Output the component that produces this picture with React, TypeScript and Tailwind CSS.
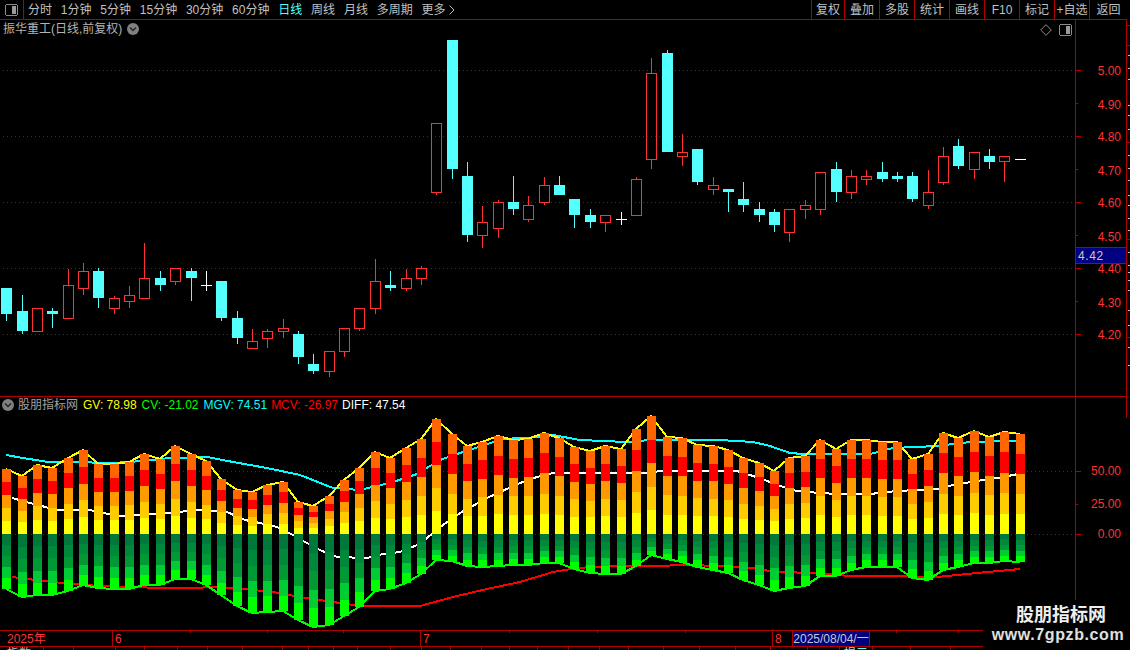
type Candle = [number, number, number, number, number, "r" | "c" | "w"];

// left, high, body top, body bottom, low, kind
const candles: Candle[] = [
  [1, 288, 288, 314, 321, "c"], [17, 295, 311, 331, 334, "c"], [32, 308, 308, 332, 332, "r"], [47, 308, 311, 314, 328, "c"],
  [63, 269, 285, 319, 319, "r"], [78, 263, 271, 289, 295, "r"], [93, 268, 271, 298, 308, "c"], [109, 296, 298, 309, 314, "r"],
  [124, 286, 295, 302, 308, "r"], [139, 243, 278, 299, 299, "r"], [155, 271, 278, 285, 291, "c"], [170, 268, 268, 282, 285, "r"],
  [186, 268, 271, 278, 301, "c"], [201, 271, 285, 285, 291, "w"], [216, 281, 281, 318, 321, "c"], [232, 311, 318, 338, 344, "c"],
  [247, 329, 341, 349, 349, "r"], [262, 329, 331, 339, 348, "r"], [278, 319, 328, 332, 338, "r"], [293, 331, 334, 357, 364, "c"],
  [308, 354, 364, 371, 374, "c"], [324, 351, 351, 372, 377, "r"], [339, 328, 328, 352, 357, "r"], [354, 308, 308, 329, 331, "r"],
  [370, 259, 281, 309, 314, "r"], [385, 271, 285, 288, 291, "c"], [401, 269, 278, 289, 291, "r"], [416, 266, 268, 279, 285, "r"],
  [431, 123, 123, 193, 195, "r"], [447, 40, 40, 169, 179, "c"], [462, 162, 176, 235, 242, "c"], [477, 206, 222, 236, 248, "r"],
  [493, 200, 202, 229, 238, "r"], [508, 176, 202, 209, 215, "c"], [523, 196, 205, 220, 222, "r"], [539, 177, 185, 203, 205, "r"],
  [554, 176, 185, 195, 195, "c"], [569, 199, 199, 215, 228, "c"], [585, 209, 215, 222, 228, "c"], [600, 215, 215, 223, 232, "r"],
  [616, 212, 219, 219, 225, "w"], [631, 177, 179, 216, 216, "r"], [646, 58, 73, 160, 169, "r"], [662, 50, 53, 152, 152, "c"],
  [677, 134, 152, 157, 166, "r"], [692, 149, 149, 182, 185, "c"], [708, 177, 185, 190, 195, "r"], [723, 189, 189, 192, 212, "c"],
  [738, 182, 199, 205, 212, "c"], [754, 202, 209, 215, 222, "c"], [769, 209, 212, 225, 232, "c"], [784, 209, 209, 233, 242, "r"],
  [800, 200, 205, 210, 219, "r"], [815, 172, 172, 210, 215, "r"], [831, 162, 169, 192, 202, "c"], [846, 170, 176, 193, 199, "r"],
  [861, 170, 176, 180, 185, "r"], [877, 162, 172, 179, 182, "c"], [892, 172, 176, 179, 182, "c"], [907, 172, 176, 199, 202, "c"],
  [923, 170, 192, 206, 209, "r"], [938, 147, 156, 183, 185, "r"], [953, 139, 146, 166, 169, "c"], [969, 152, 152, 170, 179, "r"],
  [984, 149, 156, 162, 169, "c"], [999, 156, 156, 162, 182, "r"], [1015, 159, 159, 159, 159, "w"],
];

const barTops = [
  469, 476, 465, 468, 458, 450, 464, 464, 462, 454, 459, 446, 454, 461, 479, 490, 492, 485, 482, 502, 506, 496, 480, 468,
  452, 458, 448, 439, 419, 434, 446, 442, 436, 440, 439, 433, 438, 447, 451, 446, 449, 429, 416, 437, 438, 445, 446, 450,
  458, 463, 471, 458, 456, 440, 449, 440, 440, 442, 442, 459, 454, 433, 438, 431, 437, 432, 434,
];

const barBottoms = [
  589, 597, 595, 595, 591, 585, 588, 589, 589, 585, 585, 579, 579, 585, 595, 606, 613, 612, 611, 620, 627, 625, 616, 607,
  591, 589, 583, 574, 560, 561, 566, 567, 566, 565, 565, 563, 563, 569, 573, 574, 574, 566, 555, 559, 562, 567, 570, 573,
  580, 585, 591, 588, 586, 576, 576, 570, 567, 567, 567, 578, 580, 570, 567, 563, 563, 561, 562,
];

const cyanLine =
  "6,455 23,458 48,462 83,462 100,463 113,463 143,461 170,458 207,457 233,462 267,468 300,475 333,488 360,490 393,482 417,474 420,472 440,460 463,452 503,439 540,437 553,435 580,440 627,442 650,440 720,440 753,442 770,446 790,453 803,454 870,454 893,448 937,446 970,442 1017,441";
const whiteLine =
  "12,498 30,503 57,510 90,510 117,516 167,513 200,510 227,512 245,520 260,523 277,527 293,535 305,542 320,550 337,557 367,558 383,554 400,552 417,545 427,538 443,525 460,513 487,498 520,483 537,477 553,473 647,473 660,471 737,471 753,476 770,482 780,486 797,491 820,493 837,494 870,494 897,491 937,489 953,485 977,481 1003,477 1018,474";
const redLine =
  "12,577 43,581 73,584 100,586 133,587 160,588 190,588 217,587 243,589 273,592 300,597 333,602 360,606 420,606 453,597 487,589 520,582 553,572 577,568 610,566 653,566 687,565 720,566 753,568 770,571 780,572 813,573 850,576 897,576 937,577 977,573 1020,569";

const upColors = ["#ffff00", "#ffcc00", "#ff9900", "#ff0000", "#ff6600"];
const downColors = ["#00773b", "#00883b", "#009933", "#00cc33", "#00ff00"];
const zero = 534;

const leftTabs = ["分时", "1分钟", "5分钟", "15分钟", "30分钟", "60分钟", "日线", "周线", "月线", "多周期", "更多"];
const rightTabs = [
  { label: "复权", w: "w-[33px]" }, { label: "叠加", w: "w-[35px]" }, { label: "多股", w: "w-[35px]" },
  { label: "统计", w: "w-[35px]" }, { label: "画线", w: "w-[35px]" }, { label: "F10", w: "w-[35px]" },
  { label: "标记", w: "w-[35px]" }, { label: "+自选", w: "w-[35px]" }, { label: "返回", w: "w-[38px]" },
];
const prices = ["5.00", "4.90", "4.80", "4.70", "4.60", "4.50", "4.40", "4.30", "4.20"];
const edgeRed = [25, 45, 142, 239, 337];
const edgeWhite = [55, 68, 79, 105, 115, 129, 155, 168, 180, 195, 205, 218, 230, 252, 265, 272, 280, 290, 310, 325, 347, 365];
const dateTicks = [190, 267, 343, 509, 597, 685, 896, 958];
const statusTicks = [43, 73, 115, 144, 177, 207, 242, 282, 308, 333, 357, 390, 421, 450, 481, 509, 537, 568, 599, 628, 663, 699, 735, 770, 807, 839, 872, 910, 950];

const RoundChevron = () => (
  <svg width="12" height="12" viewBox="0 0 12 12" className="shrink-0">
    <circle cx="6" cy="6" r="6" fill="#808080" />
    <path d="M3 4.5 L6 7.5 L9 4.5" fill="none" stroke="#222" strokeWidth="1.4" />
  </svg>
);

const PanelIcon = () => (
  <svg width="13" height="12" viewBox="0 0 13 12" shapeRendering="crispEdges" className="shrink-0">
    <rect x="0.5" y="0.5" width="12" height="11" rx="2" fill="none" stroke="#8c8c8c" />
    <rect x="7" y="2" width="4" height="8" fill="#9a9a9a" />
  </svg>
);

const PriceChart = () => (
  <svg viewBox="0 20 1075 376" width="1075" height="376" className="block">
    {[70, 136, 202, 268, 334].map((y) => (
      <line key={y} x1="3" x2="1075" y1={y + 0.5} y2={y + 0.5} stroke="#b00000" strokeDasharray="1 3" shapeRendering="crispEdges" />
    ))}
    <g shapeRendering="crispEdges">
      {candles.map(([x, high, top, bottom, low, kind]) => {
        const mid = x + 5.5;
        if (kind === "w") {
          return (
            <g key={x} stroke="#ffffff">
              {high !== low && <line x1={mid} x2={mid} y1={high} y2={low} />}
              <line x1={x} x2={x + 11} y1={top + 0.5} y2={top + 0.5} />
            </g>
          );
        }
        if (kind === "c") {
          return (
            <g key={x}>
              <line x1={mid} x2={mid} y1={high} y2={low} stroke="#54ffff" />
              <rect x={x} y={top} width="11" height={bottom - top} fill="#54ffff" />
            </g>
          );
        }
        return (
          <g key={x} stroke="#ff3232">
            {high < top && <line x1={mid} x2={mid} y1={high} y2={top} />}
            {low > bottom && <line x1={mid} x2={mid} y1={bottom} y2={low} />}
            <rect x={x + 0.5} y={top + 0.5} width="10" height={bottom - top - 1} fill="none" />
          </g>
        );
      })}
    </g>
  </svg>
);

const IndicatorChart = () => {
  const line = (ys: number[]) => ys.map((y, i) => `${candles[i][0] + 5},${y}`).join(" ");
  const stack = (x: number, end: number, colors: string[]) =>
    colors.map((c, i) => {
      const a = Math.round(zero + ((end - zero) * i) / 5);
      const b = Math.round(zero + ((end - zero) * (i + 1)) / 5);
      return <rect key={c} x={x + 1} y={Math.min(a, b)} width="9" height={Math.abs(b - a)} fill={c} />;
    });
  return (
    <svg viewBox="0 397 1075 233" width="1075" height="233" className="block">
      <g shapeRendering="crispEdges" fill="none" strokeWidth="2">
        <line x1="3" x2="1075" y1="471.5" y2="471.5" stroke="#b00000" strokeWidth="1" strokeDasharray="1 3" />
        <line x1="3" x2="1075" y1="534.5" y2="534.5" stroke="#b00000" strokeWidth="1" strokeDasharray="1 3" />
        <polyline points={cyanLine} stroke="#00ffff" />
        <polyline points={whiteLine} stroke="#ffffff" />
        <polyline points={redLine} stroke="#ff0000" />
        <polyline points={line(barTops)} stroke="#ffff00" />
        <polyline points={line(barBottoms)} stroke="#00ff00" />
      </g>
      <g shapeRendering="crispEdges">
        {candles.map(([x], i) => (
          <g key={x}>
            {stack(x, barTops[i], upColors)}
            {stack(x, barBottoms[i], downColors)}
          </g>
        ))}
      </g>
    </svg>
  );
};

export default function App() {
  return (
    <div className="relative h-[650px] w-[1130px] overflow-hidden bg-black font-['Liberation_Sans','Noto_Sans_CJK_SC',sans-serif] text-[12px] leading-none text-[#c0c0c0]">
      {/* toolbar */}
      <div className="flex h-[20px] w-[1127px] items-center border-b border-[#b00000]">
        <div className="flex h-full w-[24px] items-center justify-center border-r border-[#b00000]">
          <PanelIcon />
        </div>
        <div className="ml-[4px] flex items-center gap-[8.8px]">
          {leftTabs.map((t) => (
            <span key={t} className={t === "日线" ? "text-[#54ffff]" : ""}>{t}</span>
          ))}
          <svg width="6" height="10" viewBox="0 0 6 10" className="-ml-[5px]">
            <path d="M0.5 0.5 L5 5 L0.5 9.5" fill="none" stroke="#c0c0c0" />
          </svg>
        </div>
        <div className="ml-auto flex h-full">
          {rightTabs.map((t) => (
            <div key={t.label} className={`flex items-center justify-center border-l border-[#b00000] ${t.w}`}>{t.label}</div>
          ))}
        </div>
      </div>

      {/* price panel */}
      <div className="flex h-[377px] w-[1127px] border-b border-[#b00000]">
        <div className="relative w-[1075px]">
          <PriceChart />
          <div className="absolute left-[3px] top-[3px] flex items-center gap-[5px] text-[#b4b4b4]">
            <span>振华重工(日线,前复权)</span>
            <RoundChevron />
          </div>
          <div className="absolute right-[3px] top-[4px] flex items-center gap-[7px]">
            <svg width="12" height="12" viewBox="0 0 12 12">
              <path d="M6 0.7 L11.3 6 L6 11.3 L0.7 6 Z" fill="none" stroke="#8c8c8c" />
            </svg>
            <PanelIcon />
          </div>
        </div>
        <div className="relative w-[52px] border-x border-[#b00000] pt-[34px] text-[#ff3232]">
          {prices.map((p, i) => (
            <div key={p} className="flex h-[33px] items-center justify-between pr-[5px]">
              <span className={`h-px bg-[#b00000] ${i % 2 === 0 ? "w-[5px]" : "w-[2px]"}`} />
              <span className={i % 2 === 0 ? "" : "translate-y-px"}>{p}</span>
            </div>
          ))}
          <div className="absolute inset-x-0 top-[227px] flex h-[17px] items-center border-y border-[#b00000] bg-[#000080] pl-[2px] tracking-[0.6px] text-[#c8c8c8]">
            4.42
          </div>
        </div>
      </div>

      {/* indicator panel */}
      <div className="flex h-[233px] w-[1127px]">
        <div className="relative w-[1075px]">
          <IndicatorChart />
          <div className="absolute left-[2px] top-[2px] flex items-center gap-[4px]">
            <RoundChevron />
            <span className="mr-[1px] text-[#a0a0a0]">股朋指标网</span>
            <span className="mr-[1px] text-[#ffff00]">GV: 78.98</span>
            <span className="mr-[1px] text-[#00ff00]">CV: -21.02</span>
            <span className="text-[#00ffff]">MGV: 74.51</span>
            <span className="text-[#ff0000]">MCV: -26.97</span>
            <span className="text-white">DIFF: 47.54</span>
          </div>
        </div>
        <div className="relative w-[52px] border-l border-[#b00000] pt-[66px] text-[#ff3232]">
          <div className="flex h-[16px] items-center justify-between pr-[6px]">
            <span className="h-px w-[5px] bg-[#b00000]" />
            <span>50.00</span>
          </div>
          <div className="mt-[17px] flex h-[16px] items-center justify-between pr-[6px]">
            <span className="h-px w-[2px] bg-[#b00000]" />
            <span>25.00</span>
          </div>
          <div className="mt-[14px] flex h-[16px] items-center justify-between pr-[6px]">
            <span className="h-px w-[5px] bg-[#b00000]" />
            <span>0.00</span>
          </div>
          <div className="absolute right-0 top-0 h-[21px] w-px bg-[#b00000]" />
        </div>
      </div>

      {/* date bar */}
      <div className="relative flex h-[17px] w-[984px] items-center border-y border-[#b00000] text-[#ff3232]">
        <div className="flex h-full w-[113px] items-center border-r border-[#b00000] pl-[7px]">2025年</div>
        <div className="flex h-full w-[308px] items-center border-r border-[#b00000] pl-[2px]">6</div>
        <div className="flex h-full w-[352px] items-center border-r border-[#b00000] pl-[2px]">7</div>
        <div className="flex h-full w-[19px] items-center pl-[2px]">8</div>
        <div className="flex h-full w-[78px] items-center justify-center border-x border-[#b00000] bg-[#000080] text-[#c8c8c8]">2025/08/04/一</div>
        <svg width="984" height="3" className="absolute left-0 top-0" shapeRendering="crispEdges">
          {dateTicks.map((x) => (
            <line key={x} x1={x + 0.5} x2={x + 0.5} y1="0" y2="2" stroke="#b00000" />
          ))}
        </svg>
      </div>

      {/* status strip, cut off by the window */}
      <div className="relative h-[3px] w-[984px] overflow-hidden">
        <span className="absolute left-[7px] top-[1px] text-[#c0c0c0]">指数</span>
        <span className="absolute left-[844px] top-[1px] text-[#54ffff]">提示</span>
        <svg width="984" height="3" className="absolute left-0 top-0" shapeRendering="crispEdges">
          {statusTicks.map((x) => (
            <line key={x} x1={x + 0.5} x2={x + 0.5} y1="0" y2="3" stroke="#b00000" />
          ))}
        </svg>
      </div>

      {/* right edge ticks */}
      <svg width="3" height="377" className="absolute left-[1127px] top-[20px]" shapeRendering="crispEdges">
        {edgeRed.map((y) => (
          <line key={y} x1="0" x2="3" y1={y - 19.5} y2={y - 19.5} stroke="#b00000" />
        ))}
        {edgeWhite.map((y) => (
          <line key={y} x1="1" x2="3" y1={y - 19.5} y2={y - 19.5} stroke="#c0c0c0" />
        ))}
      </svg>

      {/* watermark */}
      <div className="absolute bottom-0 right-0 flex h-[50px] w-[147px] flex-col items-center bg-black pl-[3px] pt-[4px] text-[#eeeeee]">
        <span className="ml-[6px] text-[18px] font-bold leading-[22px]">股朋指标网</span>
        <span className="mt-[1px] text-[16px] font-bold leading-[16px] tracking-[0.6px] text-[#e0e0e0]">www.7gpzb.com</span>
      </div>
    </div>
  );
}
